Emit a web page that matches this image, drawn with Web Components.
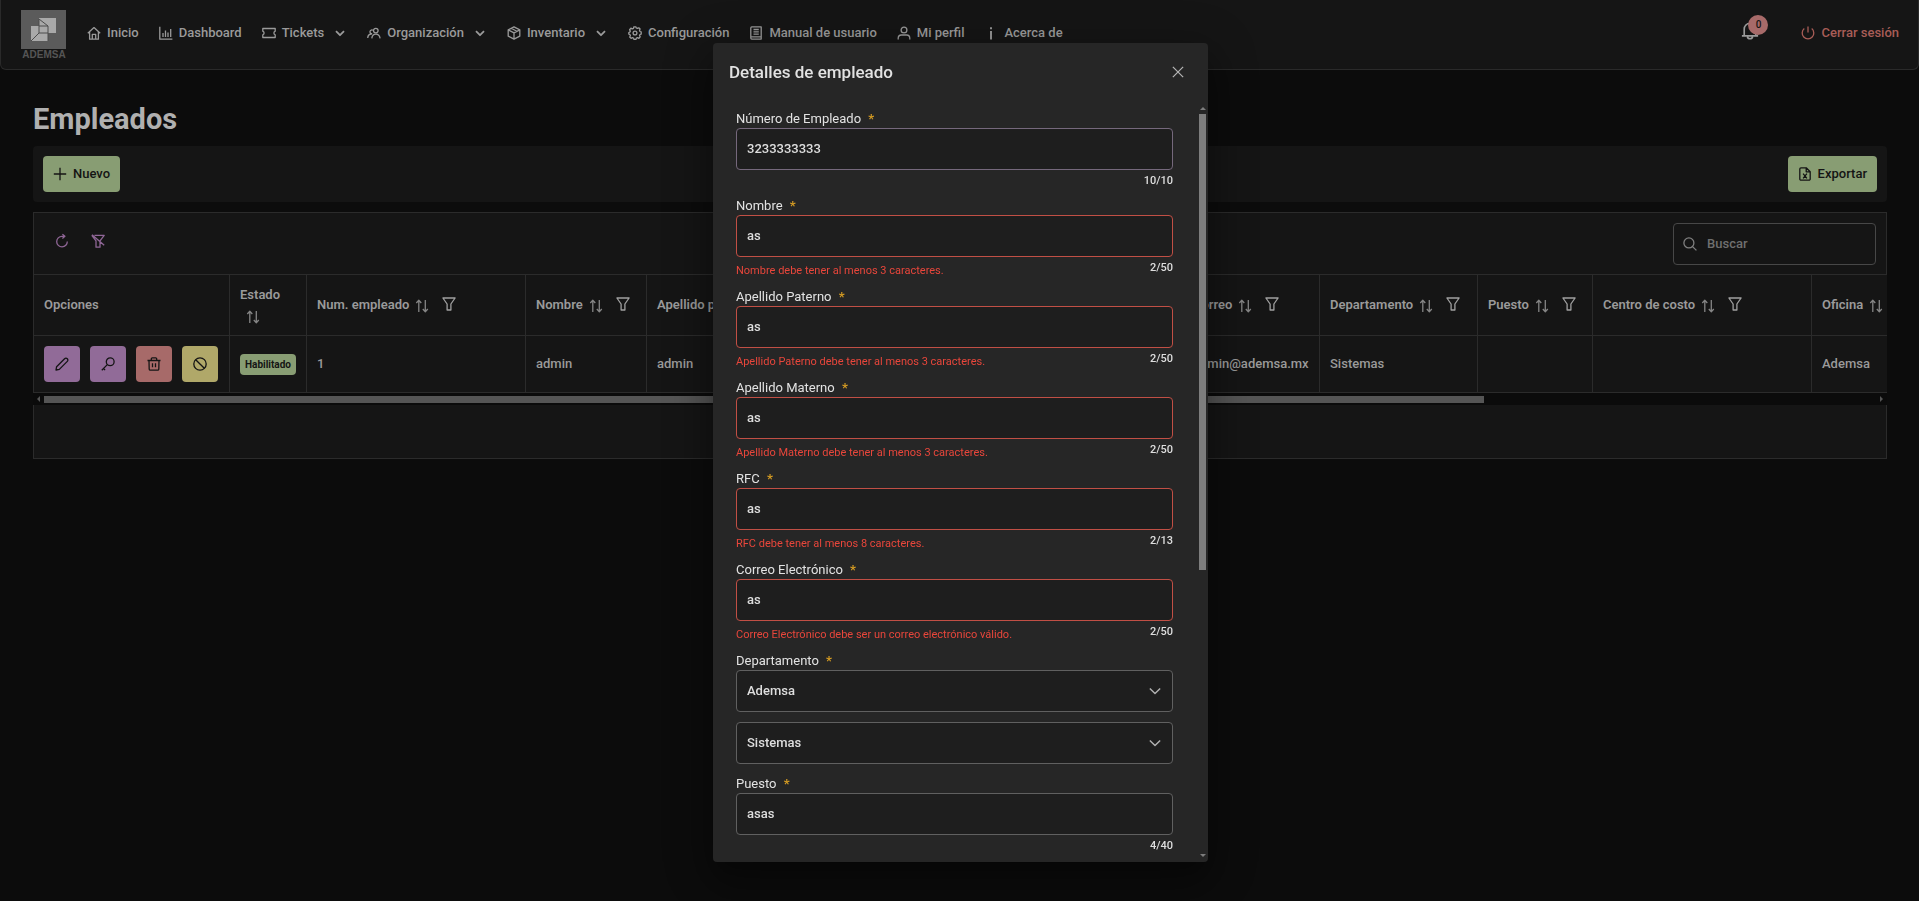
<!DOCTYPE html>
<html lang="es">
<head>
<meta charset="utf-8">
<title>Empleados</title>
<style>
  html, body { margin: 0; min-height: 100vh; background: #0c0c0c; }
  body { font: 400 13px/18px Roboto, "Liberation Sans", sans-serif; color: #9a9a9a; }
</style>
</head>
<body>
<ad-navbar>
  <ad-nav-item icon="home">Inicio</ad-nav-item>
  <ad-nav-item icon="chart">Dashboard</ad-nav-item>
  <ad-nav-item icon="ticket" menu>Tickets</ad-nav-item>
  <ad-nav-item icon="users" menu>Organización</ad-nav-item>
  <ad-nav-item icon="box" menu>Inventario</ad-nav-item>
  <ad-nav-item icon="cog">Configuración</ad-nav-item>
  <ad-nav-item icon="book">Manual de usuario</ad-nav-item>
  <ad-nav-item icon="user">Mi perfil</ad-nav-item>
  <ad-nav-item icon="info">Acerca de</ad-nav-item>
</ad-navbar>
<ad-page heading="Empleados">
  <ad-button slot="start" icon="plus">Nuevo</ad-button>
  <ad-button slot="end" icon="excel">Exportar</ad-button>
  <ad-employee-table></ad-employee-table>
</ad-page>
<ad-dialog heading="Detalles de empleado">
  <ad-field label="Número de Empleado" value="3233333333" count="10/10" active></ad-field>
  <ad-field label="Nombre" value="as" count="2/50" error="Nombre debe tener al menos 3 caracteres."></ad-field>
  <ad-field label="Apellido Paterno" value="as" count="2/50" error="Apellido Paterno debe tener al menos 3 caracteres."></ad-field>
  <ad-field label="Apellido Materno" value="as" count="2/50" error="Apellido Materno debe tener al menos 3 caracteres."></ad-field>
  <ad-field label="RFC" value="as" count="2/13" error="RFC debe tener al menos 8 caracteres."></ad-field>
  <ad-field label="Correo Electrónico" value="as" count="2/50" error="Correo Electrónico debe ser un correo electrónico válido."></ad-field>
  <ad-select-group label="Departamento" values="Ademsa,Sistemas"></ad-select-group>
  <ad-field label="Puesto" value="asas" count="4/40"></ad-field>
</ad-dialog>

<script>
const ICONS = {
  home: '<path d="M.8 7.2 7 1.6l6.200 5.600M2.600 6v7.200h8.800V6M5.300 13V8.400h3.400V13"/>',
  chart: '<path d="M.8.8v12.400h12.600M4 11V7M6.500 11V4.500M9 11V6.500M11.700 11V3"/>',
  ticket: '<path d="M.8 2.500h12.400v2.700a1.900 1.900 0 0 0 0 3.600v2.700H.8V8.800a1.900 1.900 0 0 0 0-3.600z"/>',
  users: '<circle cx="8.800" cy="4.600" r="2.300"/><path d="M5.200 7.700A1.900 1.900 0 1 1 6 4.300M.7 12c.2-2.600 1.600-4 3.800-4M4.800 12.400c.3-2.800 1.600-4.300 4-4.300s3.900 1.500 4.300 4.300"/>',
  box: '<path d="m7 .8 5.800 3v6.400L7 13.200l-5.800-3V3.800zM1.200 3.800 7 6.800l5.800-3M7 6.800v6.400M4.200 2.300l5.600 3"/>',
  cog: '<circle cx="7" cy="7" r="1.900"/><path d="m5.800.8-.3 1.500-1.200.6-1.400-.7-1.300 1.500.7 1.400-.5 1-1 .4v1.600l1.200.5.4 1.100-.7 1.300 1.400 1.300 1.300-.6 1.100.4.500 1.300h1.900l.5-1.300 1.100-.5 1.400.7 1.300-1.500-.7-1.300.5-1 1.200-.4V5.900L12 5.500l-.5-1.200.6-1.300-1.300-1.200-1.400.6-1.100-.5L7.800.8z"/>',
  book: '<path d="M2.800.9h9.400v12.200H2.800a1.200 1.200 0 0 1-1-1.200V2a1.200 1.200 0 0 1 1-1.100zM2 10.800h10M4.500 3.500h5.300M4.500 5.800h5.300M4.500 8.100h5.300"/>',
  user: '<circle cx="7" cy="4" r="2.900"/><path d="M1.200 13.400v-1.200c0-2 1.300-3.200 3.200-3.200h5.200c1.900 0 3.200 1.200 3.200 3.200v1.200"/>',
  info: '<path d="M7 5v8.500M7 1.200v2" stroke-width="1.900"/>',
  chevron: '<path d="m3 5.200 4 4 4-4" stroke-width="1.800"/>',
  down: '<path d="m1 4 6 6 6-6" stroke-width="1.700"/>',
  bell: '<path d="M.7 10.800h12.600M2.500 10.500V5.500a4.500 4.500 0 0 1 9 0v5M5 11.500c.4 2 3.600 2 4 0" />',
  power: '<path d="M7 .6v6M3.300 2.600a5.800 5.800 0 1 0 7.400 0"/>',
  plus: '<path d="M7 .8v12.400M.8 7h12.400"/>',
  excel: '<path d="M8.200.8H3A1.200 1.200 0 0 0 1.800 2v10A1.200 1.200 0 0 0 3 13.200h8a1.200 1.200 0 0 0 1.200-1.200V4.800zM8.200.8v4h4M5.100 6.600l3.800 4.700M8.900 6.600l-3.800 4.700"/>',
  search: '<circle cx="5.900" cy="5.900" r="5"/><path d="m9.600 9.600 3.800 3.800"/>',
  refresh: '<path d="M12.300 7.500A5.300 5.300 0 1 1 7 2.300h2.700M7.400.2l2.500 2.100-2.500 2.200"/>',
  filterOff: '<path d="M3.500 1.300h9.700L9 6.900v6.300H5V6.900L.8 1.300M1 .8l12.200 10.400"/>',
  filter: '<path d="M.9 1h12.200L8.900 7v6H5.100V7z"/>',
  sort: '<path d="M3.800 13V1.500M1.300 4l2.500-2.700L6.300 4M10.300 1v11.500M7.800 10l2.500 2.700 2.500-2.700"/>',
  pencil: '<path d="m1 13 .6-3.300 8-8a1.800 1.800 0 0 1 2.700 2.700l-8 8z"/>',
  key: '<circle cx="9.200" cy="4.800" r="3.900"/><path d="M6.300 7.600.8 13.200M2.500 11.500l1.600 1.600"/>',
  trash: '<path d="M.5 3.500h13M2 3.500l.2 8.700a1.100 1.100 0 0 0 1.100 1h7.400a1.100 1.100 0 0 0 1.100-1l.2-8.700M4.300 3.300V1.800a1 1 0 0 1 1-1h3.400a1 1 0 0 1 1 1v1.500M5.500 6.300v4M8.500 6.300v4"/>',
  ban: '<circle cx="7" cy="7" r="6.200"/><path d="m2.700 2.700 8.600 8.600"/>',
  close: '<path d="m1 1 12 12M13 1 1 13" stroke-width="1.500"/>'
};

class Base extends HTMLElement {
  connectedCallback() {
    if (this.shadowRoot) return;
    this.attachShadow({ mode: 'open' }).innerHTML = this.render();
  }
}
const define = (name, render) =>
  customElements.define(name, class extends Base { render() { return render(this); } });

define('ad-icon', el => `
  <style>
    :host { display: inline-block; width: 14px; height: 14px; flex: none; }
    svg { display: block; width: 100%; height: 100%; fill: none; stroke: currentColor; stroke-width: 1.3; stroke-linejoin: round; overflow: visible; }
  </style>
  <svg viewBox="0 0 14 14" aria-hidden="true">${ICONS[el.getAttribute('name')]}</svg>`);

define('ad-logo', () => `
  <style>:host { display: block; width: 46px; height: 50px; } svg { display: block; }</style>
  <svg width="46" height="50" viewBox="0 0 46 50" role="img" aria-label="ADEMSA">
    <path fill="#5b5b5b" d="M0 1h45v39H0z"/>
    <path fill="#a9a9a9" d="M18 9h17v15H27v8H10V17h8z"/>
    <path fill="none" stroke="#4c4c4c" d="m18 10 9 7v7H18V10M18 17h9M18 24l-8 8M27 24v8"/>
    <text x="23" y="49" text-anchor="middle" font-family="Liberation Sans, sans-serif" font-weight="700" font-size="10" fill="#555">ADEMSA</text>
  </svg>`);

define('ad-nav-item', el => `
  <style>
    :host { display: block; }
    a { display: flex; align-items: center; gap: 6px; color: inherit; text-decoration: none; white-space: nowrap; }
    .arrow { margin-left: 3px; }
  </style>
  <a href="#"><ad-icon name="${el.getAttribute('icon')}"></ad-icon><slot></slot>${el.hasAttribute('menu') ? '<ad-icon class="arrow" name="chevron"></ad-icon>' : ''}</a>`);

define('ad-navbar', () => `
  <style>
    :host { display: block; }
    header { box-sizing: border-box; height: 70px; display: flex; align-items: flex-start; padding: 9px 19px 0 20px; background: #151515; border: 1px solid #2a2a2a; border-top: 0; border-radius: 0 0 6px 6px; }
    nav { display: flex; gap: 20px; margin: 15px auto 0 20px; font-weight: 500; }
    button { all: unset; display: flex; align-items: center; gap: 6px; cursor: pointer; font-weight: 500; }
    .bell { position: relative; margin: 13px 42px 0 0; color: #9a9a9a; }
    .bell ad-icon { width: 18px; height: 18px; }
    .badge { position: absolute; left: 7px; top: -7px; width: 20px; height: 20px; border-radius: 50%; background: #a76a69; color: #141414; font-size: 10px; line-height: 20px; text-align: center; }
    .exit { margin-top: 15px; color: #a85d57; }
  </style>
  <header>
    <ad-logo></ad-logo>
    <nav><slot></slot></nav>
    <button class="bell" aria-label="Notificaciones"><ad-icon name="bell"></ad-icon><span class="badge">0</span></button>
    <button class="exit"><ad-icon name="power"></ad-icon>Cerrar sesión</button>
  </header>`);

define('ad-button', el => `
  <style>
    :host { display: block; font-weight: 500; }
    button { display: flex; align-items: center; gap: 6px; height: 36px; padding: 0 10px; border: 0; border-radius: 4px; background: #889d73; color: #141414; font: inherit; cursor: pointer; }
  </style>
  <button><ad-icon name="${el.getAttribute('icon')}"></ad-icon><slot></slot></button>`);

define('ad-page', el => `
  <style>
    :host { display: block; padding: 30px 32px 0 33px; }
    h1 { margin: 0; font-size: 29px; line-height: 38px; font-weight: 700; color: #b0b0b0; }
    .bar { display: flex; justify-content: space-between; margin: 8px 0 10px; padding: 10px; background: #151515; border-radius: 4px; }
  </style>
  <main>
    <h1>${el.getAttribute('heading')}</h1>
    <div class="bar"><slot name="start"></slot><slot name="end"></slot></div>
    <slot></slot>
  </main>`);

const columns = [
  ['Opciones', 196, ''], ['Estado', 77, 's'], ['Num. empleado', 219, 'sf', '1'],
  ['Nombre', 121, 'sf', 'admin'], ['Apellido paterno', 268, 'sf', 'admin'], ['Apellido materno', 268, 'sf', 'admin'],
  ['Correo', 137, 'sf', 'admin@ademsa.mx'], ['Departamento', 158, 'sf', 'Sistemas'], ['Puesto', 115, 'sf', ''],
  ['Centro de costo', 219, 'sf', ''], ['Oficina', 580, 'sf', 'Ademsa']
];
const actions = [['pencil', 'Editar', '#916b98'], ['key', 'Contraseña', '#916b98'], ['trash', 'Eliminar', '#a76a69'], ['ban', 'Deshabilitar', '#b0a869']];

define('ad-employee-table', () => `
  <style>
    :host { display: block; --line: #2b2b2b; }
    .top { display: flex; justify-content: space-between; padding: 10px 10px 9px; background: #151515; border: 1px solid var(--line); }
    .tools { display: flex; gap: 22px; padding: 11px 0 0 11px; color: #8f6696; }
    .tools button { all: unset; width: 14px; height: 14px; cursor: pointer; }
    .tools ad-icon { display: block; }
    .search { display: grid; align-items: center; width: 203px; height: 42px; font-weight: 500; }
    .search > * { grid-area: 1 / 1; }
    .search ad-icon { margin-left: 10px; color: #808080; }
    .search input { box-sizing: border-box; width: 100%; height: 100%; padding: 0 10px 2px 33px; border: 1px solid #474747; border-radius: 4px; background: none; font: inherit; color: inherit; outline: 0; }
    .search input::placeholder { color: #6f6f6f; opacity: 1; }
    .view { overflow: hidden; border-left: 1px solid var(--line); background: #151515; }
    table { table-layout: fixed; width: 2358px; border-collapse: separate; border-spacing: 0; }
    th, td { box-sizing: border-box; padding: 0 10px; text-align: left; vertical-align: middle; border-right: 1px solid var(--line); border-bottom: 1px solid var(--line); white-space: nowrap; }
    th { height: 61px; padding-bottom: 2px; font-weight: 600; line-height: 21px; }
    th.wrap { white-space: normal; padding-bottom: 0; }
    td { height: 57px; font-weight: 500; }
    .sort { margin-left: 6px; vertical-align: -4px; color: #858585; }
    .filter { margin-left: 13px; vertical-align: -2px; color: #a0a0a0; }
    .actions { display: flex; gap: 10px; }
    .actions button { display: grid; place-items: center; width: 36px; height: 36px; padding: 0; border: 0; border-radius: 4px; color: #141414; }
    .tag { display: inline-block; padding: 0 5px; border-radius: 4px; background: #889d73; color: #141414; font-size: 10px; line-height: 21px; font-weight: 700; }
    .track { display: flex; align-items: center; gap: 4px; height: 12px; padding: 0 4px; background: #0b0b0b; }
    .rail { flex: 1; height: 7px; }
    .thumb { width: 1440px; max-width: 79%; height: 7px; background: #555; }
    .left, .right { border: 3px solid transparent; }
    .left { border-left: 0; border-right-color: #555; }
    .right { border-right: 0; border-left-color: #555; }
    .foot { height: 53px; background: #151515; border: 1px solid var(--line); border-top: 0; }
  </style>
  <div class="top">
    <div class="tools">
      <button aria-label="Actualizar"><ad-icon name="refresh"></ad-icon></button>
      <button aria-label="Limpiar filtros"><ad-icon name="filterOff"></ad-icon></button>
    </div>
    <label class="search"><ad-icon name="search"></ad-icon><input type="search" placeholder="Buscar" aria-label="Buscar"></label>
  </div>
  <div class="view">
    <table>
      <colgroup>${columns.map(c => `<col style="width:${c[1]}px">`).join('')}</colgroup>
      <thead><tr>${columns.map(c => `<th class="${c[2] === 's' ? 'wrap' : ''}">${c[0]}${c[2].includes('s') ? '<ad-icon class="sort" name="sort"></ad-icon>' : ''}${c[2].includes('f') ? '<ad-icon class="filter" name="filter"></ad-icon>' : ''}</th>`).join('')}</tr></thead>
      <tbody><tr>
        <td><div class="actions">${actions.map(a => `<button aria-label="${a[1]}" style="background:${a[2]}"><ad-icon name="${a[0]}"></ad-icon></button>`).join('')}</div></td>
        <td><span class="tag">Habilitado</span></td>
        ${columns.slice(2).map(c => `<td>${c[3]}</td>`).join('')}
      </tr></tbody>
    </table>
  </div>
  <div class="track"><i class="left"></i><div class="rail"><div class="thumb"></div></div><i class="right"></i></div>
  <div class="foot"></div>`);

const fieldCss = `
    :host { display: block; }
    label { display: block; height: 18px; line-height: 18px; color: #e2e2e2; }
    label span { margin-left: 4px; color: #d49b23; font-weight: 700; }
    input, select { box-sizing: border-box; display: block; width: 100%; height: 42px; margin: 0; padding: 0 10px 1px; border: 1px solid #606060; border-radius: 4px; background: #1e1e1e; color: #dedede; font: inherit; font-weight: 500; outline: 0; appearance: none; }`;

define('ad-field', el => {
  const error = el.getAttribute('error');
  return `
  <style>${fieldCss}
    :host([active]) input { border-color: #75687c; }
    :host([error]) input { border-color: #c14f45; }
    .foot { display: flex; justify-content: space-between; height: 27px; font-size: 11px; line-height: 22px; }
    :host([error]) .foot { height: 31px; }
    .error { padding-top: 3px; color: #e8463b; }
    .count { margin-left: auto; color: #dedede; font-weight: 500; }
  </style>
  <label for="f">${el.getAttribute('label')} <span>*</span></label>
  <input id="f" value="${el.getAttribute('value')}">
  <div class="foot">${error ? `<span class="error">${error}</span>` : ''}<span class="count">${el.getAttribute('count')}</span></div>`;
});

define('ad-select-group', el => `
  <style>${fieldCss}
    :host { padding-bottom: 11px; }
    .box { display: grid; align-items: center; }
    .box + .box { margin-top: 10px; }
    .box > * { grid-area: 1 / 1; }
    ad-icon { justify-self: end; width: 12px; height: 12px; margin-right: 12px; color: #b0b0b0; pointer-events: none; }
  </style>
  <label for="s0">${el.getAttribute('label')} <span>*</span></label>
  ${el.getAttribute('values').split(',').map((v, i) => `<div class="box"><select id="s${i}" aria-label="${v}"><option>${v}</option></select><ad-icon name="down"></ad-icon></div>`).join('')}`);

define('ad-dialog', el => `
  <style>
    :host { position: fixed; inset: 0; display: grid; justify-content: center; padding: 43px 0 39px 2px; }
    section { box-sizing: border-box; display: flex; flex-direction: column; width: 495px; min-height: 0; overflow: hidden; border-radius: 4px; background: #262626; color: #dedede; box-shadow: 0 11px 15px -7px rgba(0,0,0,.2), 0 24px 38px 3px rgba(0,0,0,.24), 0 9px 46px 8px rgba(0,0,0,.2); }
    header { flex: none; display: flex; align-items: center; justify-content: space-between; height: 60px; padding: 0 24px 2px 16px; box-sizing: border-box; }
    h2 { margin: 0; font-size: 17px; line-height: 24px; font-weight: 500; color: #e2e2e2; }
    header button { all: unset; display: grid; cursor: pointer; color: #b0b0b0; }
    header ad-icon { width: 12px; height: 12px; }
    .body { flex: 1; min-height: 0; display: flex; }
    .content { flex: 1; overflow: hidden; padding: 7px 24px 0 23px; }
    .bar { display: flex; flex-direction: column; align-items: center; gap: 4px; width: 7px; padding: 4px 2px 5px; }
    .rail { flex: 1; align-self: stretch; }
    .thumb { height: 62%; background: #7d7d7d; }
    .up, .down { border: 3px solid transparent; }
    .up { border-top: 0; border-bottom-color: #7d7d7d; }
    .down { border-bottom: 0; border-top-color: #7d7d7d; }
  </style>
  <section role="dialog" aria-label="${el.getAttribute('heading')}">
    <header><h2>${el.getAttribute('heading')}</h2><button aria-label="Cerrar"><ad-icon name="close"></ad-icon></button></header>
    <div class="body">
      <div class="content"><slot></slot></div>
      <div class="bar"><i class="up"></i><div class="rail"><div class="thumb"></div></div><i class="down"></i></div>
    </div>
  </section>`);
</script>
</body>
</html>
